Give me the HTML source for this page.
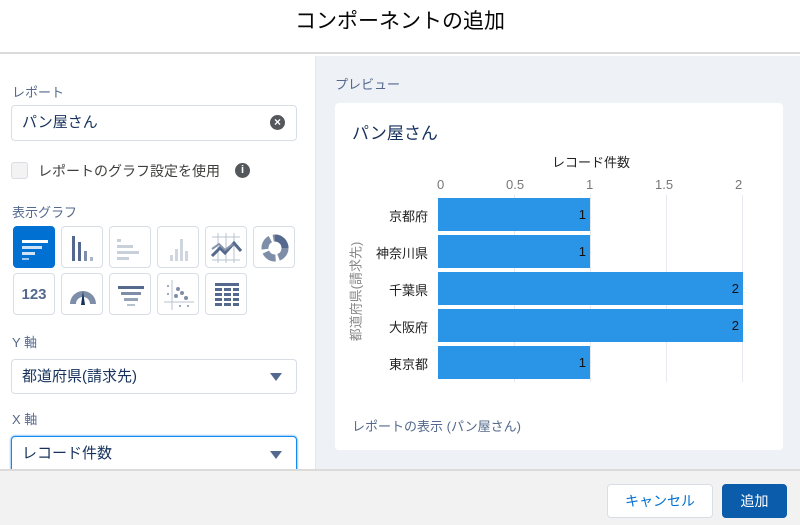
<!DOCTYPE html>
<html><head><meta charset="utf-8"><style>
*{box-sizing:border-box;margin:0;padding:0}
body{width:800px;height:525px;overflow:hidden;font-family:"Liberation Sans","Noto Sans CJK JP",sans-serif;background:#fff;position:relative;color:#16325c}
.a{position:absolute}
.hdr{left:0;top:0;width:800px;height:54px;border-bottom:2px solid #dddbda;text-align:center;font-size:21px;line-height:44px;color:#080707}
.lbl{font-size:13px;color:#54698d}
.inp{left:11px;width:286px;height:36px;border:1px solid #d8dde6;border-radius:4px;font-size:15px;color:#16325c;padding-left:10px;line-height:34px;background:#fff}
.tile{width:42px;height:42px;border:1px solid #d8dde6;border-radius:4px;background:#fff}
.right{left:315px;top:56px;width:485px;height:413px;background:#eef1f6;border-left:1px solid #e4e6ea}
.card{left:335px;top:103px;width:448px;height:347px;background:#fff;border-radius:4px}
.bar{left:438px;height:33px;background:#2a94e6;color:#111;font-size:13px;text-align:right;padding-right:4px;line-height:33px}
.cat{font-size:13px;color:#222;right:372px;text-align:right;width:80px}
.tick{font-size:13px;color:#777;top:177px}
.grid{top:195px;width:1px;height:187px;background:#e6e9ef}
.foot{left:0;top:469px;width:800px;height:56px;background:#f3f2f2;border-top:2px solid #dddbda}
.btn{height:34px;border-radius:4px;font-size:14px;text-align:center;line-height:32px}
.tri{width:0;height:0;border-left:6px solid transparent;border-right:6px solid transparent;border-top:8px solid #54698d}
</style></head><body>
<div class="a hdr">コンポーネントの追加</div>

<div class="a lbl" style="left:12px;top:82px">レポート</div>
<div class="a inp" style="top:105px">パン屋さん</div>
<div class="a" style="left:270px;top:115px;width:15px;height:15px;border-radius:50%;background:#54585c;color:#fff;font-size:12px;line-height:15px;text-align:center;font-weight:bold">×</div>
<div class="a" style="left:11px;top:162px;width:17px;height:17px;border:1px solid #d8dde6;border-radius:3px;background:#f3f3f3"></div>
<div class="a" style="left:38px;top:161px;font-size:14px;color:#3e3e3c">レポートのグラフ設定を使用</div>
<div class="a" style="left:235px;top:163px;width:15px;height:15px;border-radius:50%;background:#54585c;color:#fff;font-size:11px;line-height:15px;text-align:center;font-weight:bold">i</div>
<div class="a lbl" style="left:12px;top:202px">表示グラフ</div>

<div class="a tile" style="left:13px;top:226px;background:#0070d2;border-color:#0070d2"><svg width="42" height="42"><rect x="8" y="13" width="26" height="3" fill="#fff"/><rect x="8" y="19" width="20" height="3" fill="#cfe3f7"/><rect x="8" y="25" width="13" height="3" fill="#cfe3f7"/><rect x="8" y="31" width="7" height="2" fill="#9cc7ef"/></svg></div>
<div class="a tile" style="left:61px;top:226px"><svg width="42" height="42"><rect x="10" y="9" width="3" height="25" fill="#54698d"/><rect x="16" y="15" width="3" height="19" fill="#54698d"/><rect x="22" y="24" width="3" height="10" fill="#7f8ea8"/><rect x="28" y="30" width="3" height="4" fill="#a8b7c7"/></svg></div>
<div class="a tile" style="left:109px;top:226px"><svg width="42" height="42" fill="#c8d0dc"><rect x="7" y="12" width="4" height="3"/><rect x="7" y="18" width="16" height="3"/><rect x="7" y="24" width="22" height="3"/><rect x="7" y="30" width="12" height="3"/></svg></div>
<div class="a tile" style="left:157px;top:226px"><svg width="42" height="42" fill="#d0d6e0"><rect x="12" y="28" width="3" height="6"/><rect x="17" y="22" width="3" height="12"/><rect x="22" y="12" width="3" height="22"/><rect x="27" y="24" width="3" height="10"/></svg></div>
<div class="a tile" style="left:205px;top:226px"><svg width="42" height="42" stroke="#54698d" fill="none"><path d="M6 10h28M6 33h28M12 6v30M20 6v30M28 6v30" stroke="#b8c3d2" stroke-width="1"/><path d="M6 29l8-8 5 5 9-10 7 8" stroke-width="3"/><path d="M6 22l7-5 6 6 8-6" stroke="#8795aa" stroke-width="2"/></svg></div>
<div class="a tile" style="left:253px;top:226px"><svg width="42" height="42"><circle cx="21" cy="21" r="10" fill="none" stroke="#7f8ea8" stroke-width="7" stroke-dasharray="12 3"/><path d="M21 11a10 10 0 0 1 10 10" fill="none" stroke="#54698d" stroke-width="7"/></svg></div>
<div class="a tile" style="left:13px;top:273px;font-size:15px;font-weight:bold;color:#54698d;text-align:center;line-height:42px">123</div>
<div class="a tile" style="left:61px;top:273px"><svg width="42" height="42"><path d="M8 30a13 13 0 0 1 26 0h-6a7 7 0 0 0-14 0z" fill="#7f8ea8"/><path d="M21 17l-2 14h4z" fill="#16325c"/></svg></div>
<div class="a tile" style="left:109px;top:273px"><svg width="42" height="42" fill="#54698d"><rect x="8" y="12" width="26" height="3"/><rect x="11" y="18" width="20" height="3" fill="#7f8ea8"/><rect x="14" y="24" width="14" height="3" fill="#94a3b8"/><rect x="17" y="30" width="8" height="2" fill="#b8c3d2"/></svg></div>
<div class="a tile" style="left:157px;top:273px"><svg width="42" height="42" fill="#7f8ea8"><path d="M14 6v30M6 28h30" stroke="#b8c3d2"/><circle cx="20" cy="15" r="2"/><circle cx="24" cy="19" r="2"/><circle cx="18" cy="22" r="2"/><circle cx="28" cy="24" r="2"/><circle cx="10" cy="12" r="1"/><circle cx="10" cy="20" r="1"/><circle cx="22" cy="32" r="1"/><circle cx="30" cy="32" r="1"/></svg></div>
<div class="a tile" style="left:205px;top:273px"><svg width="42" height="42" fill="#54698d"><rect x="9" y="9" width="24" height="3"/><rect x="9" y="14" width="7" height="3"/><rect x="18" y="14" width="7" height="3"/><rect x="27" y="14" width="6" height="3"/><rect x="9" y="19" width="7" height="3"/><rect x="18" y="19" width="7" height="3"/><rect x="27" y="19" width="6" height="3"/><rect x="9" y="24" width="7" height="3"/><rect x="18" y="24" width="7" height="3"/><rect x="27" y="24" width="6" height="3"/><rect x="9" y="29" width="7" height="3"/><rect x="18" y="29" width="7" height="3"/><rect x="27" y="29" width="6" height="3"/></svg></div>

<div class="a lbl" style="left:12px;top:332px">Y 軸</div>
<div class="a inp" style="top:359px;height:35px">都道府県(請求先)</div>
<div class="a tri" style="left:270px;top:373px"></div>
<div class="a lbl" style="left:12px;top:409px">X 軸</div>
<div class="a inp" style="top:436px;height:40px;border-color:#1589ee;box-shadow:0 0 2px #1589ee">レコード件数</div>
<div class="a tri" style="left:270px;top:451px"></div>

<div class="a right"></div>
<div class="a" style="left:335px;top:74px;font-size:13px;color:#54698d">プレビュー</div>
<div class="a card"></div>
<div class="a" style="left:352px;top:119px;font-size:17px;color:#16325c">パン屋さん</div>
<div class="a" style="left:552px;top:152px;font-size:13px;color:#222">レコード件数</div>
<div class="a tick" style="left:437px">0</div>
<div class="a tick" style="left:506px">0.5</div>
<div class="a tick" style="left:586px">1</div>
<div class="a tick" style="left:655px">1.5</div>
<div class="a tick" style="left:735px">2</div>
<div class="a grid" style="left:514px"></div>
<div class="a grid" style="left:590px"></div>
<div class="a grid" style="left:666px"></div>
<div class="a grid" style="left:742px"></div>
<div class="a bar" style="top:198px;width:152px">1</div>
<div class="a bar" style="top:235px;width:152px">1</div>
<div class="a bar" style="top:272px;width:305px">2</div>
<div class="a bar" style="top:309px;width:305px">2</div>
<div class="a bar" style="top:346px;width:152px">1</div>
<div class="a cat" style="left:348px;top:206px">京都府</div>
<div class="a cat" style="left:348px;top:243px">神奈川県</div>
<div class="a cat" style="left:348px;top:280px">千葉県</div>
<div class="a cat" style="left:348px;top:317px">大阪府</div>
<div class="a cat" style="left:348px;top:354px">東京都</div>
<div class="a" style="left:300px;top:282px;width:110px;transform:rotate(-90deg);font-size:13px;color:#888;text-align:center">都道府県(請求先)</div>
<div class="a" style="left:352px;top:416px;font-size:13px;color:#54698d">レポートの表示 (パン屋さん)</div>

<div class="a foot"></div>
<div class="a btn" style="left:607px;top:484px;width:106px;background:#fff;border:1px solid #d8dde6;color:#0070d2">キャンセル</div>
<div class="a btn" style="left:722px;top:484px;width:65px;background:#0b5cab;border:1px solid #0b5cab;color:#fff">追加</div>
</body></html>
